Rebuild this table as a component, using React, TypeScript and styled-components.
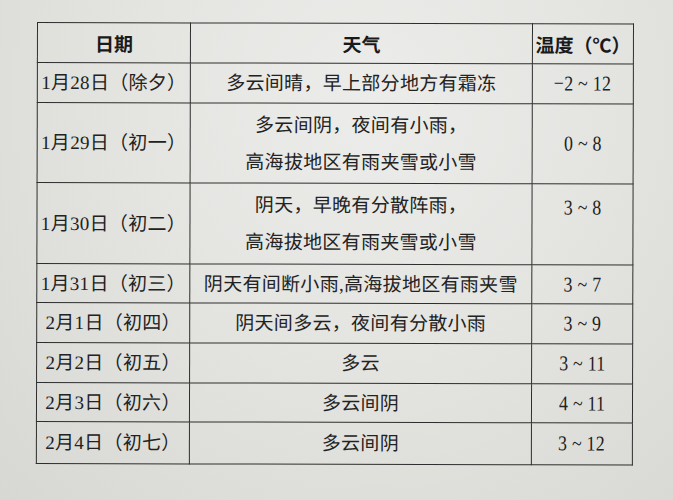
import React from 'react';
import styled, { createGlobalStyle } from 'styled-components';

const GlobalStyle = createGlobalStyle`
  html, body {
    margin: 0;
    padding: 0;
  }
  body {
    width: 673px;
    height: 500px;
    overflow: hidden;
    font-family: "Liberation Serif", "Noto Sans CJK SC", serif;
  }
`;

const Paper = styled.div`
  width: 673px;
  height: 500px;
  box-sizing: border-box;
  padding: 22px 0 0 37px;
  background: radial-gradient(ellipse at 55% 20%, #ececea 0%, #e4e4e1 45%, #d7d7d3 100%);
`;

const Table = styled.table`
  border-collapse: collapse;
  color: #222;
  transform: rotate(0.15deg);
  transform-origin: left top;
`;

const Row = styled.tr<{ $h: number }>`
  height: ${(p) => p.$h}px;
`;

const HeadCell = styled.th<{ $w: number }>`
  width: ${(p) => p.$w}px;
  border: 1.5px solid #2e2e2e;
  padding: 0;
  font-family: "Noto Sans CJK SC", sans-serif;
  font-weight: 700;
  font-size: 19px;
  color: #1a1a1a;
  text-align: center;
  vertical-align: middle;
`;

const Cell = styled.td<{ $top?: boolean }>`
  border: 1.5px solid #2e2e2e;
  padding: ${(p) => (p.$top ? '5px 0 0' : '0')};
  font-family: "Liberation Serif", "Noto Sans CJK SC", serif;
  font-size: 19px;
  font-weight: 400;
  letter-spacing: 0.3px;
  text-align: center;
  vertical-align: ${(p) => (p.$top ? 'top' : 'middle')};
  white-space: nowrap;
  line-height: 37px;
`;

const Temp = styled.span`
  font-size: 21px;
  transform: scaleX(0.85);
  display: inline-block;
`;

type Item = {
  date: string;
  weather: string[];
  temp: string;
  h: number;
  tempTop?: boolean;
};

const rows: Item[] = [
  { date: '1月28日（除夕）', weather: ['多云间晴，早上部分地方有霜冻'], temp: '−2 ~ 12', h: 40 },
  { date: '1月29日（初一）', weather: ['多云间阴，夜间有小雨，', '高海拔地区有雨夹雪或小雪'], temp: '0 ~ 8', h: 80 },
  { date: '1月30日（初二）', weather: ['阴天，早晚有分散阵雨，', '高海拔地区有雨夹雪或小雪'], temp: '3 ~ 8', h: 81, tempTop: true },
  { date: '1月31日（初三）', weather: ['阴天有间断小雨,高海拔地区有雨夹雪'], temp: '3 ~ 7', h: 39 },
  { date: '2月1日（初四）', weather: ['阴天间多云，夜间有分散小雨'], temp: '3 ~ 9', h: 40 },
  { date: '2月2日（初五）', weather: ['多云'], temp: '3 ~ 11', h: 40 },
  { date: '2月3日（初六）', weather: ['多云间阴'], temp: '4 ~ 11', h: 39 },
  { date: '2月4日（初七）', weather: ['多云间阴'], temp: '3 ~ 12', h: 42 },
];

export default function App() {
  return (
    <>
      <GlobalStyle />
      <Paper>
        <Table>
          <thead>
            <Row $h={40}>
              <HeadCell $w={152}>日期</HeadCell>
              <HeadCell $w={341}>天气</HeadCell>
              <HeadCell $w={100}>温度（℃）</HeadCell>
            </Row>
          </thead>
          <tbody>
            {rows.map((r) => (
              <Row key={r.date} $h={r.h}>
                <Cell>{r.date}</Cell>
                <Cell>
                  {r.weather.map((line) => (
                    <div key={line}>{line}</div>
                  ))}
                </Cell>
                <Cell $top={r.tempTop}>
                  <Temp>{r.temp}</Temp>
                </Cell>
              </Row>
            ))}
          </tbody>
        </Table>
      </Paper>
    </>
  );
}
